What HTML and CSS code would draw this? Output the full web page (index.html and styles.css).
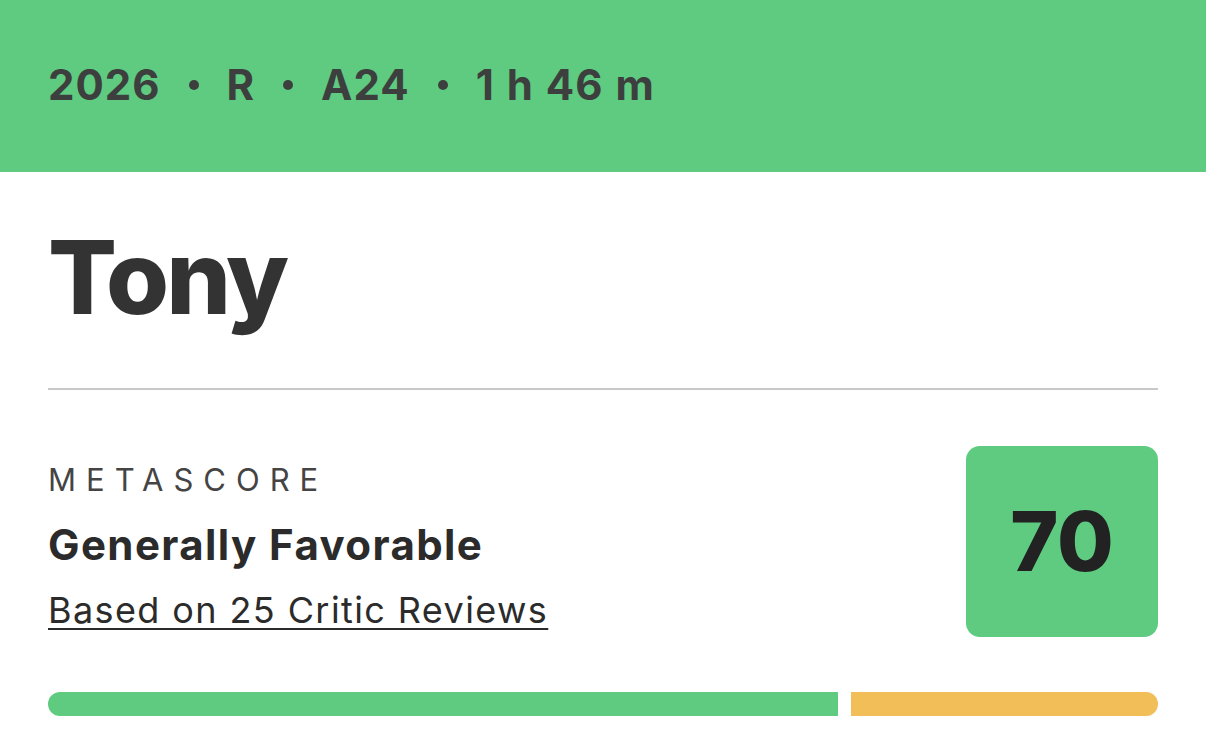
FILE: index.html
```html
<!DOCTYPE html>
<html lang="en">
  <head>
    <meta charset="UTF-8" />
    <meta name="viewport" content="width=device-width, initial-scale=1.0" />
    <title>Tony - Metascore</title>
    <link rel="stylesheet" href="styles.css">
  </head>
  <body>
    <div class="header">
      <div class="meta">
        <span>2026</span>
        <span class="dot"></span>
        <span>R</span>
        <span class="dot"></span>
        <span>A24</span>
        <span class="dot"></span>
        <span>1 h 46 m</span>
      </div>
    </div>

    <div class="container">
      <h1 class="title">Tony</h1>

      <div class="score-row">
        <div class="score-info">
          <div class="label">METASCORE</div>
          <div class="verdict">Generally Favorable</div>
          <a class="reviews" href="#">Based on 25 Critic Reviews</a>
        </div>
        <div class="score-box">70</div>
      </div>

      <!-- positive / mixed split -->
      <div class="bar">
        <div class="bar-positive" style="width: 790px"></div>
        <div class="bar-mixed"></div>
      </div>
    </div>
  </body>
</html>
```

FILE: styles.css
```css
body {
  font-family: Inter, Lato, sans-serif;
  background-color: #fff;
  color: #333;
  margin: 0;
  padding: 0;
}
.header {
  background-color: #5ecb80;
  height: 172px;
  padding: 0 48px;
  box-sizing: border-box;
}
.meta {
  display: flex;
  align-items: center;
  gap: 28px;
  padding-top: 58px;
  font-size: 42px;
  font-weight: 700;
  letter-spacing: 1px;
  word-spacing: 1px;
  color: #3d3f3e;
  line-height: 54px;
}
.meta .dot {
  width: 10px;
  height: 10px;
  border-radius: 50%;
  background: #3d3f3e;
}
.container {
  padding: 0 48px;
}
.title {
  margin: 0;
  padding-top: 50px;
  padding-bottom: 56px;
  font-size: 102px;
  font-weight: 800;
  line-height: 110px;
  letter-spacing: -3px;
  color: #333;
  border-bottom: 2px solid #c8c8c8;
}
.score-row {
  display: flex;
  justify-content: space-between;
  align-items: flex-start;
  margin-top: 56px;
}
.label {
  font-size: 31px;
  letter-spacing: 10px;
  color: #444;
  line-height: 36px;
  margin-top: 16px;
}
.verdict {
  font-size: 42px;
  font-weight: 700;
  letter-spacing: 1.4px;
  color: #2b2b2b;
  margin-top: 22px;
  line-height: 50px;
}
.reviews {
  display: inline-block;
  font-size: 36px;
  letter-spacing: 1.4px;
  color: #2b2b2b;
  margin-top: 18px;
  line-height: 44px;
  text-decoration: underline;
  text-underline-offset: 5px;
  text-decoration-thickness: 2px;
}
.score-box {
  width: 192px;
  height: 191px;
  border-radius: 14px;
  background: #5ecb80;
  display: flex;
  align-items: center;
  justify-content: center;
  font-size: 82px;
  font-weight: 800;
  color: #222;
}
.bar {
  display: flex;
  gap: 13px;
  margin-top: 55px;
  height: 24px;
}
.bar-positive {
  background: #5ecb80;
  border-radius: 12px 0 0 12px;
}
.bar-mixed {
  flex: 1;
  background: #f2be58;
  border-radius: 0 12px 12px 0;
}
```
